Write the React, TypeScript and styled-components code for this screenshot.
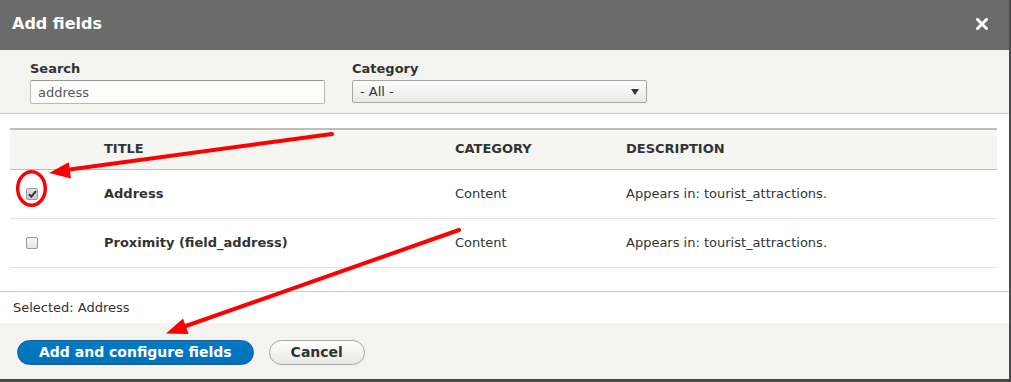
import styled, { createGlobalStyle } from "styled-components";

const GlobalStyle = createGlobalStyle`
  html, body {
    margin: 0;
    padding: 0;
    background: #4a4a4a;
  }
  body {
    font-family: "DejaVu Sans", "Liberation Sans", sans-serif;
    color: #333;
  }
`;

const rows = [
  { title: "Address", category: "Content", description: "Appears in: tourist_attractions.", checked: true },
  { title: "Proximity (field_address)", category: "Content", description: "Appears in: tourist_attractions.", checked: false },
];

const App = () => {
  return (
    <>
      <GlobalStyle />
      <StDialog>
        <StTitleBar>
          <StTitle>Add fields</StTitle>
          <StClose aria-label="Close">
            <svg width="12" height="12" viewBox="0 0 12 12">
              <path d="M1.5 1.5 L10.5 10.5 M10.5 1.5 L1.5 10.5" stroke="#fff" strokeWidth="3" strokeLinecap="square" />
            </svg>
          </StClose>
        </StTitleBar>

        <StFilters>
          <StField>
            <StLabel>Search</StLabel>
            <StInput defaultValue="address" />
          </StField>
          <StField>
            <StLabel>Category</StLabel>
            <StSelect>
              <span>- All -</span>
              <StCaret />
            </StSelect>
          </StField>
        </StFilters>

        <StBody>
          <StTable>
            <StHeadRow>
              <StHeadCell />
              <StHeadCell>Title</StHeadCell>
              <StHeadCell>Category</StHeadCell>
              <StHeadCell>Description</StHeadCell>
            </StHeadRow>
            {rows.map((row) => (
              <StRow key={row.title}>
                <StCheckCell>
                  <StCheckbox $checked={row.checked}>
                    {row.checked && (
                      <svg width="9" height="8" viewBox="0 0 9 8">
                        <path d="M1 4.2 L3.4 6.6 L8 1.2" stroke="#333" strokeWidth="2" fill="none" />
                      </svg>
                    )}
                  </StCheckbox>
                </StCheckCell>
                <StTitleCell>{row.title}</StTitleCell>
                <StCell>{row.category}</StCell>
                <StCell>{row.description}</StCell>
              </StRow>
            ))}
          </StTable>
        </StBody>

        <StSummary>Selected: Address</StSummary>

        <StButtonPane>
          <StButton $primary>Add and configure fields</StButton>
          <StButton>Cancel</StButton>
        </StButtonPane>

        <StAnnotations width="1009" height="379" viewBox="0 0 1009 379">
          <g stroke="#f00" strokeWidth="4" strokeLinecap="round" fill="none">
            <line x1="332" y1="134" x2="66" y2="170" />
            <line x1="459" y1="230" x2="183" y2="327" />
            <ellipse cx="31.5" cy="188.5" rx="13.8" ry="16.8" strokeWidth="3.5" />
          </g>
          <g fill="#f00">
            <polygon points="49,173 68.7,162.2 71,178.4" />
            <polygon points="166,333.5 183,318.6 188.6,334" />
          </g>
        </StAnnotations>
      </StDialog>
    </>
  );
};
export default App;

const StDialog = styled.div`
  position: relative;
  width: 1009px;
  height: 379px;
  background: #fff;
  display: flex;
  flex-direction: column;
  overflow: hidden;
`;
const StTitleBar = styled.div`
  height: 50px;
  flex: none;
  background: #6b6b6b;
  display: flex;
  align-items: center;
  justify-content: space-between;
  padding: 0 21px 0 12px;
  box-sizing: border-box;
`;
const StTitle = styled.h1`
  margin: 0 0 4px;
  font-size: 16px;
  font-weight: 700;
  color: #fff;
`;
const StClose = styled.button`
  background: none;
  border: 0;
  padding: 0;
  width: 12px;
  height: 12px;
  display: flex;
  margin-bottom: 2px;
  cursor: pointer;
`;
const StFilters = styled.div`
  height: 64px;
  flex: none;
  box-sizing: border-box;
  background: #f3f3ef;
  border-bottom: 1px solid #ccc;
  display: flex;
  gap: 27px;
  padding: 11px 0 0 30px;
`;
const StField = styled.div`
  display: flex;
  flex-direction: column;
`;
const StLabel = styled.label`
  font-size: 13px;
  font-weight: 700;
  color: #333;
  line-height: 15px;
  margin-bottom: 4px;
`;
const StInput = styled.input`
  width: 295px;
  height: 24px;
  box-sizing: border-box;
  border: 1px solid #b8b8b8;
  border-top-color: #999;
  border-radius: 2px;
  background: #fcfcfa;
  padding: 0 7px;
  font-family: "DejaVu Sans", sans-serif;
  font-size: 13px;
  color: #595959;
  outline: none;
`;
const StSelect = styled.div`
  width: 295px;
  height: 23px;
  box-sizing: border-box;
  border: 1px solid #a6a6a6;
  border-radius: 2px;
  background: linear-gradient(#fefefe, #e8e8e6);
  display: flex;
  align-items: center;
  justify-content: space-between;
  padding: 0 7px 0 7px;
  font-size: 13px;
  color: #333;
`;
const StCaret = styled.span`
  width: 0;
  height: 0;
  border-left: 4.5px solid transparent;
  border-right: 4.5px solid transparent;
  border-top: 6px solid #333;
  margin-top: 1px;
`;
const StBody = styled.div`
  padding: 14px 12px 0 10px;
  flex: none;
`;
const StTable = styled.div`
  display: grid;
  grid-template-columns: 94px 351px 171px 1fr;
`;
const StHeadRow = styled.div`
  display: contents;
`;
const StHeadCell = styled.div`
  height: 37px;
  padding-bottom: 2px;
  background: #f5f5f2;
  border-top: 2px solid #bfbfba;
  border-bottom: 1px solid #bfbfba;
  display: flex;
  align-items: center;
  font-size: 13px;
  font-weight: 700;
  text-transform: uppercase;
  color: #333;
  box-sizing: content-box;
`;
const StRow = styled.div`
  display: contents;
`;
const StCell = styled.div`
  height: 49px;
  box-sizing: border-box;
  border-bottom: 1px solid #e6e4df;
  padding-bottom: 1px;
  display: flex;
  align-items: center;
  font-size: 13px;
  color: #333;
`;
const StTitleCell = styled(StCell)`
  font-weight: 700;
`;
const StCheckCell = styled(StCell)`
  padding-left: 16px;
  padding-bottom: 1px;
`;
const StCheckbox = styled.span<{ $checked: boolean }>`
  width: 12px;
  height: 12px;
  box-sizing: border-box;
  border: 1px solid #9a9a9a;
  border-radius: 2px;
  background: ${(p) => (p.$checked ? "linear-gradient(#e0e0e0, #c8c8c8)" : "linear-gradient(#fafafa, #e2e2e2)")};
  display: flex;
  align-items: center;
  justify-content: center;
`;
const StSummary = styled.div`
  margin-top: 23px;
  border-top: 1px solid #ccc;
  height: 32px;
  box-sizing: border-box;
  padding: 0 13px 1px;
  display: flex;
  align-items: center;
  font-size: 13px;
  color: #333;
  flex: none;
`;
const StButtonPane = styled.div`
  flex: 1;
  background: #f3f3ef;
  display: flex;
  align-items: center;
  gap: 15px;
  padding: 2px 0 0 17px;
`;
const StButton = styled.button<{ $primary?: boolean }>`
  height: 25px;
  box-sizing: border-box;
  border-radius: 13px;
  padding: 0 21px;
  font-family: "DejaVu Sans", sans-serif;
  font-size: 14px;
  font-weight: 700;
  cursor: pointer;
  border: 1px solid ${(p) => (p.$primary ? "#1e5c90" : "#a6a6a6")};
  background: ${(p) => (p.$primary ? "linear-gradient(#007bc6, #0071b8)" : "linear-gradient(#fefefe, #e8e8e6)")};
  color: ${(p) => (p.$primary ? "#fff" : "#333")};
`;
const StAnnotations = styled.svg`
  position: absolute;
  left: 0;
  top: 0;
  pointer-events: none;
`;
